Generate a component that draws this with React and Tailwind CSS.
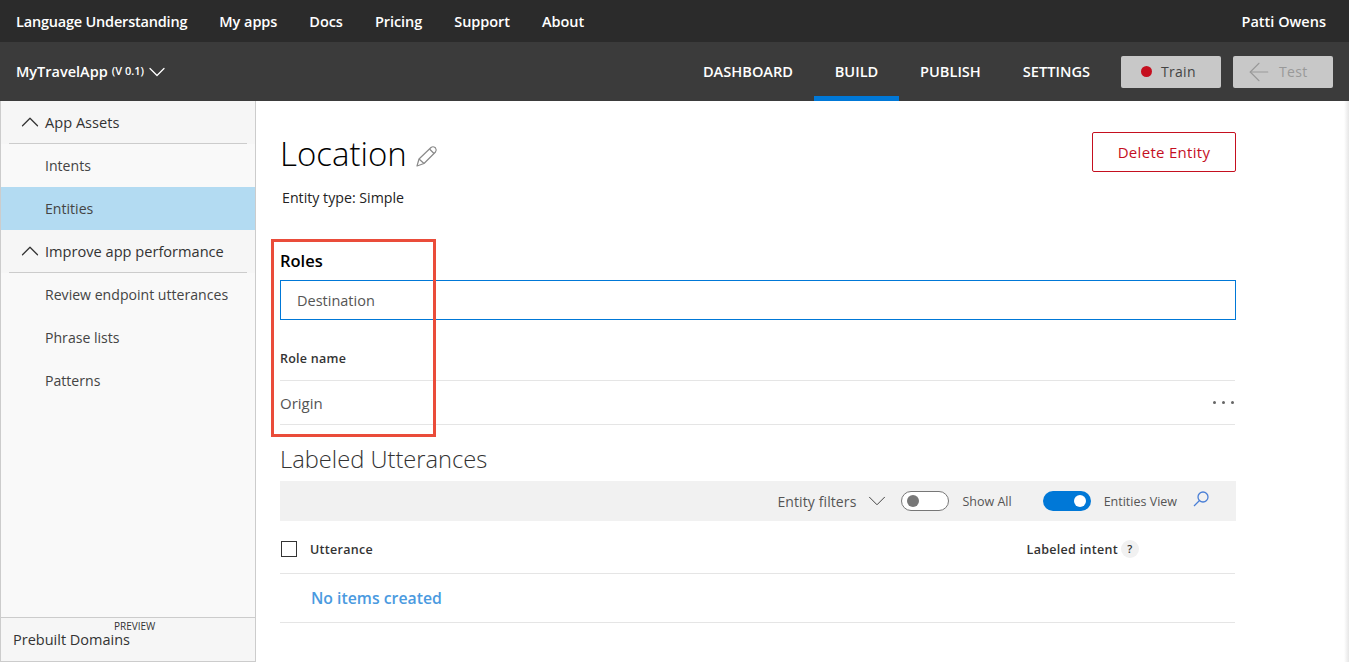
import { ChevronDown, ChevronUp, ArrowLeft } from 'lucide-react'

const topLinks = ['My apps', 'Docs', 'Pricing', 'Support', 'About']
const tabs = ['DASHBOARD', 'BUILD', 'PUBLISH', 'SETTINGS']

function SideGroup({ label }) {
	return (
		<div className="bg-[#f6f6f6] px-2">
			<div className="h-[43px] flex items-center border-b border-[#cccccc]">
				<ChevronUp className="w-[30px] h-[30px] ml-[6px] text-[#333333]" strokeWidth={1} />
				<span className="text-[14.6px] pt-[2px] text-[#333333]">{label}</span>
			</div>
		</div>
	)
}

function SideItem({ label, active }) {
	return (
		<div className={`h-[43px] flex items-center pl-[44px] text-[14.1px] text-[#444444] ${active ? 'bg-[#b3dbf2]' : ''}`}>
			{label}
		</div>
	)
}

function Toggle({ on }) {
	return (
		<div className={`w-[48px] h-[20px] rounded-full flex items-center px-[5px] ${on ? 'bg-[#0078d7] justify-end' : 'bg-white border border-[#777777]'}`}>
			<div className={`w-[12px] h-[12px] rounded-full ${on ? 'bg-white' : 'bg-[#777777]'}`}></div>
		</div>
	)
}

export default function App() {
	return (
		<div className="w-[1349px] h-[662px] overflow-hidden flex flex-col bg-white font-['Open_Sans',sans-serif] relative">
			{/* Top nav */}
			<div className="h-[42px] shrink-0 bg-[#2b2b2b] flex items-center justify-between pl-4 pr-[23px] pt-[2px] text-white text-[14.5px] font-semibold">
				<div className="flex items-center gap-8 tracking-[-0.05px]">
					<span className="tracking-[-0.2px]">Language Understanding</span>
					{topLinks.map((l) => <span key={l}>{l}</span>)}
				</div>
				<span>Patti Owens</span>
			</div>

			{/* App bar */}
			<div className="h-[59px] shrink-0 bg-[#3b3b3b] flex items-center justify-between pl-4 pr-4 text-white">
				<div className="flex items-center">
					<span className="text-[14.5px] font-semibold">MyTravelApp</span>
					<span className="text-[11px] font-semibold ml-[4px]">(V 0.1)</span>
					<ChevronDown className="w-[28px] h-[28px] -ml-px -my-2" strokeWidth={1.1} />
				</div>
				<div className="flex items-center h-full">
					{tabs.map((t) => (
						<div key={t} className={`h-full flex items-center justify-center text-[14.6px] font-semibold border-b-[5px] pt-[5px] ${t === 'BUILD' ? 'w-[85px] border-[#0078d7]' : 'px-[21px] border-transparent'}`}>{t}</div>
					))}
					<button className="ml-[10px] w-[100px] h-[32px] rounded-[2px] bg-[#c8c8c8] flex items-center pl-[20px] gap-[9px] text-[14px] font-medium tracking-[0.3px] text-[#444444]">
						<span className="w-[11px] h-[11px] rounded-full bg-[#c50f1f]"></span>
						Train
					</button>
					<button className="ml-3 w-[100px] h-[32px] rounded-[2px] bg-[#c8c8c8] flex items-center pl-[11px] gap-[5px] text-[14px] font-medium tracking-[0.3px] text-[#999999]">
						<ArrowLeft className="w-[30px] h-[30px]" strokeWidth={0.9} />
						Test
					</button>
				</div>
			</div>

			<div className="flex-1 flex min-h-0">
				{/* Sidebar */}
				<div className="w-[256px] shrink-0 flex flex-col bg-[#f9f9f9] border-x border-b border-[#cccccc]">
					<div className="flex-1">
						<div className="mx-2 border-t border-[#cccccc]"></div>
						<div className="-mt-px"><SideGroup label="App Assets" /></div>
						<SideItem label="Intents" />
						<SideItem label="Entities" active />
						<SideGroup label="Improve app performance" />
						<SideItem label="Review endpoint utterances" />
						<SideItem label="Phrase lists" />
						<SideItem label="Patterns" />
					</div>
					<div className="h-[44px] border-t border-[#cccccc] bg-[#f6f6f6] pl-3 relative">
						<span className="absolute left-[113px] top-[3px] text-[10px] leading-[10px] text-[#333333]">PREVIEW</span>
						<div className="pt-[15px] text-[14.5px] leading-[14px] text-[#333333]">Prebuilt Domains</div>
					</div>
				</div>

				{/* Main */}
				<div className="flex-1 pl-6 pr-[108px]">
					<div className="flex justify-between pt-[31px] h-[131px]">
						<div>
							<div className="flex items-center gap-[9px]">
								<h1 className="text-[33px] leading-[44px] font-light text-black">Location</h1>
								<svg className="w-[22px] h-[22px] mt-[3px]" viewBox="0 0 22 22" fill="none" stroke="#8a8a8a" strokeWidth="1.2" strokeLinejoin="round">
									<path d="M1 21 L3 14 L15 2.5 Q17 1 19 2.5 L19.5 3 Q21 5 19.5 7 L8 18.5 Z" />
									<path d="M3 14 L8 18.5 M13.5 4 L18 8.5" />
								</svg>
							</div>
							<p className="text-[14.2px] mt-[11px] ml-[2px] text-[#222222]">Entity type: Simple</p>
						</div>
						<button className="w-[144px] h-[40px] border border-[#c50f1f] rounded-[2px] text-[15px] tracking-[0.3px] text-[#c50f1f]">Delete Entity</button>
					</div>

					<h2 className="text-[16.5px] leading-[20px] pt-[19px] h-[48px] font-semibold text-black box-content -mb-[19px]">Roles</h2>
					<div className="h-[40px] border border-[#0078d7] flex items-center pl-4 pt-[2px] text-[14.5px] text-[#555555]">Destination</div>
					<div className="h-[61px] mr-px border-b border-[#e5e5e5] flex items-end pb-[11px] text-[12.5px] tracking-[0.25px] font-semibold text-[#333333]">Role name</div>
					<div className="h-[44px] mr-px border-b border-[#e5e5e5] flex items-center justify-between pt-px text-[15px] text-[#555555]">
						Origin
						<span className="flex gap-[6px] -mt-[2px] mr-px">
							<i className="w-[3px] h-[3px] rounded-full bg-[#666666]"></i>
							<i className="w-[3px] h-[3px] rounded-full bg-[#666666]"></i>
							<i className="w-[3px] h-[3px] rounded-full bg-[#666666]"></i>
						</span>
					</div>

					<h2 className="h-[56px] flex items-end pb-[6px] text-[23.7px] leading-[32px] font-light text-[#333333]">Labeled Utterances</h2>

					<div className="h-[40px] bg-[#f1f1f1] flex items-center justify-end pr-[26px] text-[12.5px] text-[#555555]">
						<span className="text-[14px] tracking-[0.1px]">Entity filters</span>
						<ChevronDown className="w-[30px] h-[30px] ml-[6px] text-[#444444]" strokeWidth={0.8} />
						<div className="ml-[9px]"><Toggle /></div>
						<span className="ml-[13px] pt-[2px]">Show All</span>
						<div className="ml-[31px]"><Toggle on /></div>
						<span className="ml-[13px] pt-[2px]">Entities View</span>
						<svg className="w-[18px] h-[18px] ml-[15px] -mt-[4px]" viewBox="0 0 18 18" fill="none" stroke="#4a7fd6" strokeWidth="1.3">
							<circle cx="11" cy="7" r="5" />
							<path d="M7.5 10.5 L2 16" />
						</svg>
					</div>

					<div className="h-[53px] mr-px pt-[4px] border-b border-[#e5e5e5] flex items-center text-[12.5px] tracking-[0.3px] font-semibold text-[#333333]">
						<span className="w-[16px] h-[16px] ml-px border border-[#333333]"></span>
						<span className="ml-[13px] pt-[2px]">Utterance</span>
						<span className="ml-auto pt-[2px]">Labeled intent</span>
						<span className="ml-[3px] mr-[96px] w-[18px] h-[18px] rounded-full bg-[#f1f1f1] flex items-center justify-center text-[11px]">?</span>
					</div>
					<div className="h-[49px] mr-px pt-[2px] border-b border-[#e5e5e5] flex items-center pl-[31px] text-[15.8px] font-semibold text-[#4a9ae0]">No items created</div>
				</div>

				{/* Right edge shadow */}
				<div className="w-[5px] shrink-0 bg-gradient-to-r from-white to-[#e6e6e6]"></div>
			</div>

			{/* Red callout drawn over the roles section */}
			<div className="absolute left-[271px] top-[239px] w-[165px] h-[198px] border-[3px] border-[#ea4c3a] pointer-events-none"></div>
		</div>
	)
}
